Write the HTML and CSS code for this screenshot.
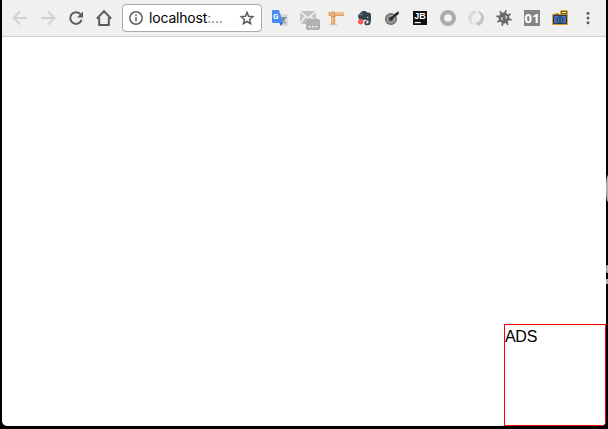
FILE: index.html
```html
<!DOCTYPE html>
<html lang="en">
<head>
<meta charset="utf-8">
<title>localhost</title>
<link rel="stylesheet" href="styles.css">
</head>
<body>
<div class="backdrop"><i class="mark mark-tall"></i><i class="mark mark-upper"></i><i class="mark mark-lower"></i></div>
<div class="window">
  <header class="toolbar">
    <svg class="cell faint" viewBox="0 0 28 36"><path d="M21 18H8M14 11.5 7.6 18l6.4 6.5"/></svg>
    <svg class="cell faint" viewBox="0 0 28 36"><path d="M7 18h13M14 11.5l6.4 6.5-6.4 6.5"/></svg>
    <svg class="cell dark" viewBox="0 0 28 36"><path d="M18.4 14.2A5.8 5.8 0 1 0 19.6 19.8"/><path class="solid" d="M21 11.4v6h-6z"/></svg>
    <svg class="cell dark" viewBox="0 0 28 36"><path d="M6.8 18.6 14 11.2l7.2 7.4M9.2 17.5V25h9.6v-7.5"/></svg>
    <div class="omnibox">
      <svg class="info" viewBox="0 0 16 16"><circle cx="8" cy="8" r="6.2"/><path d="M8 7.2v4.2M8 4.5v1.7"/></svg>
      <span class="address">localhost<span class="rest">:...</span></span>
      <svg class="star" viewBox="0 0 16 16"><path d="M8 2.4l1.6 3.9 4.2.4-3.2 2.8 1 4.2L8 11.5l-3.6 2.2 1-4.2-3.2-2.8 4.2-.4z"/></svg>
    </div>
    <svg class="cell" viewBox="0 0 28 36"><path fill="#d9d9d9" d="M13 14h8.8v12H16z"/><path fill="#7d8c98" d="M15.5 17h5v1.2h-1.1c-.2 1.2-.7 2.1-1.3 2.8l2 1.8-.8.9-2-1.9-1.1.9v-1.6l.6-.4-1.3-1.6z"/><path fill="#4a8af4" d="M7 10h6l4.2 13H7a1 1 0 0 1-1-1V11a1 1 0 0 1 1-1z"/><path fill="#2f66cc" d="M13.4 23h3.8l-2.4 3z"/><text class="google" x="7.1" y="19">G</text></svg>
    <svg class="cell" viewBox="0 0 28 36"><path fill="#c3c3c3" d="M6 11h16v13H6z"/><path fill="none" stroke="#f1f1f1" stroke-width="1.4" d="M6 11.4l8 6.6 8-6.6M6 24l5-7.5M22 24l-5-7.5"/><rect x="12" y="19" width="14" height="11" rx="1.5" fill="#b1b1b1"/><path fill="#fff" d="M15 26h1.6v1.4H15zm3.2 0h1.6v1.4h-1.6zm3.2 0H23v1.4h-1.6z"/></svg>
    <svg class="cell" viewBox="0 0 28 36"><ellipse cx="11.5" cy="24.4" rx="4" ry=".9" fill="#d2d2d2"/><rect x="7" y="12" width="14.8" height="4" fill="#eab67e"/><rect x="9" y="11.5" width="4.2" height="13" rx="1" fill="#e4a163"/><path fill="#f6cc9b" d="M9.8 13h1.4v10H9.8zM13 12.4h8.5v1.2H13z"/><path stroke="#b57438" stroke-width=".7" d="M7.2 12v4M15.5 14.7V16M18 14.7V16M20.5 14.7V16M9 16.3h4.4"/></svg>
    <svg class="cell" viewBox="0 0 28 36"><path fill="#35434b" d="M8 15.2l4.2-4.2h3.4l1 1.2 3 .5c.8.2 1.1.8 1.2 1.6.4 3.3.3 6.8-.4 9.3-.3 1.2-1.1 1.7-2.8 1.7-2.6 0-3.3-.9-3.2-2.6 0-1.3.7-2 2.3-2v1.4c-.8.1-.9 1.1-.2 1.5h1.6c.4-1 .5-2.1.4-3.2-1.6.2-3-.2-3.5-1.2-.5.8-1.6 1.1-3.4.9-2-.3-3.5-1.3-3.6-4.9z"/><path fill="#8b979d" d="M8.6 14.6h3.2v-3.2l.5.1v3.7H8.5z"/><path fill="#e4e7e8" d="M16.6 17.6c.1-1.3 1.7-1.2 1.8.3z"/><circle cx="10.7" cy="21.8" r="2.7" fill="#fa5b59"/></svg>
    <svg class="cell" viewBox="0 0 28 36"><circle cx="13" cy="19" r="5.5" fill="#8a8a8a" stroke="#707070" stroke-width="1.1"/><circle cx="13" cy="19" r="3.4" fill="#777" stroke="#a9a9a9"/><path stroke="#292929" stroke-width="2" stroke-linecap="round" d="M13 18.8l3.8-3.3"/><path fill="#242424" d="M16 14.6l3.8-3.2 1.2.3-.6 2.7-3.2 2z"/><circle cx="12.8" cy="19" r="1.8" fill="#303030"/></svg>
    <svg class="cell" viewBox="0 0 28 36"><rect x="7" y="11" width="14" height="14" fill="#101010"/><text class="jb" x="8.2" y="19.2" textLength="11.4" lengthAdjust="spacingAndGlyphs">JB</text><path fill="#fff" d="M8.7 22h6v1.2h-6z"/></svg>
    <svg class="cell" viewBox="0 0 28 36"><circle cx="14" cy="18" r="5.9" fill="#f3f3f3" stroke="#adadad" stroke-width="4.2"/></svg>
    <svg class="cell" viewBox="0 0 28 36"><path fill="#dcdcdc" d="M12.5 10.2A7.8 7.8 0 0 0 8 23l5.2 3c-3.7-3.4-4.4-7.4-2.2-10.5 1-1.4 2.4-2 4-2z"/><path fill="#c4c4c4" d="M15.5 25.8A7.8 7.8 0 0 0 20 13l-5.2-3c3.7 3.4 5.4 7.4 3.2 10.5-1 1.4-3 2.3-5 2z"/></svg>
    <svg class="cell" viewBox="0 0 28 36"><g transform="translate(14 18) rotate(14)"><g stroke="#686868" stroke-width="1.8"><path d="M0-8V8M-7.8 0H7.8M-5.5-5.5 5.5 5.5M5.5-5.5-5.5 5.5"/></g><circle r="5.4" fill="#686868"/></g><path fill="none" stroke="#ddd" stroke-width="1.1" d="M12.6 17l-1.2 1.6 1.3 1.5M15.2 15.6l1.6 1.5-1.2 1.7"/></svg>
    <svg class="cell" viewBox="0 0 28 36"><rect x="6" y="10" width="16" height="16" fill="#858585"/><text class="binary" x="6.4" y="22.8" textLength="15.2">01</text></svg>
    <svg class="cell" viewBox="0 0 28 36"><g stroke="#e59a20" stroke-width="1.4" stroke-linejoin="round"><path fill="#ffe36b" d="M15 11h6v3.5h-6z"/><path fill="#294f88" d="M6.8 14.6h2.7v-1h3v1h8.7v9.7H6.8z"/></g><path fill="#3b6fbd" stroke="#202a3d" stroke-width=".8" d="M7.5 15.4h13v8.2h-13z"/><path fill="#f9ef83" stroke="#383415" stroke-width=".8" d="M15.4 11.4h5.2v2.3h-5.2z"/><circle cx="14" cy="19.8" r="2.7" fill="#6f98cf" stroke="#18283e" stroke-width=".9"/><circle cx="14" cy="19.8" r="1.2" fill="#15243a"/></svg>
    <svg class="cell" viewBox="0 0 28 36"><g fill="#606060"><circle cx="14" cy="13.3" r="1.5"/><circle cx="14" cy="18" r="1.5"/><circle cx="14" cy="22.7" r="1.5"/></g></svg>
  </header>
  <main class="page"><aside class="ad">ADS</aside></main>
</div>
</body>
</html>
```
FILE: styles.css
```css
* { box-sizing: border-box; }
body {
  margin: 0;
  width: 608px;
  height: 429px;
  padding: 0 2px 3px;
  overflow: hidden;
  background: #000;
  font-family: "Liberation Sans", sans-serif;
}
.window {
  display: flex;
  flex-direction: column;
  height: 426px;
  overflow: hidden;
  background: #fff;
  border-radius: 0 0 5px 5px;
}
.toolbar {
  display: flex;
  flex: none;
  height: 37px;
  padding-left: 4px;
  background: #f0f0f0;
  border-bottom: 1px solid #d0d0d0;
}
.cell { flex: none; width: 28px; height: 36px; }
.faint, .dark { fill: none; stroke-width: 2; }
.faint { stroke: #d2d2d2; }
.dark { stroke: #5c5c5c; }
.dark .solid { fill: #5c5c5c; stroke: none; }
.omnibox {
  display: flex;
  flex: none;
  align-items: center;
  width: 140px;
  height: 28px;
  margin: 4px 4px 0;
  padding: 0 6px 0 5px;
  background: #fff;
  border: 1px solid #aaa;
  border-radius: 4px;
}
.info, .star { width: 16px; height: 16px; fill: none; stroke: #5c5c5c; stroke-width: 1.5; }
.address {
  flex: 1;
  margin-left: 5px;
  font: 14px/20px Inter, sans-serif;
  letter-spacing: -0.18px;
  color: #000;
  white-space: nowrap;
}
.rest { color: #777; }
.google { font: bold 8px Roboto, sans-serif; fill: #fff; }
.jb { font: bold 9px "Liberation Sans", sans-serif; fill: #fff; }
.binary { font: bold 13px "Open Sans", sans-serif; fill: #fff; }
.page { display: flex; flex: 1; align-items: flex-end; justify-content: flex-end; }
.ad {
  width: 102px;
  height: 102px;
  padding-top: 2px;
  border: 1px solid #f00;
  font-size: 16px;
  line-height: 20px;
  letter-spacing: -0.3px;
  color: #000;
}
/* Desktop artwork showing past the window's right edge */
.backdrop { position: absolute; top: 0; right: 0; width: 2px; height: 429px; }
.mark { position: absolute; right: 0; width: 2px; background: #b0b0b0; }
.mark-tall { top: 175px; height: 27px; border-radius: 2px 0 0 2px / 12px 0 0 12px; }
.mark-upper { top: 265px; height: 8px; border-radius: 1px 0 0 1px / 3px 0 0 3px; }
.mark-lower { top: 279px; height: 5px; }
```
